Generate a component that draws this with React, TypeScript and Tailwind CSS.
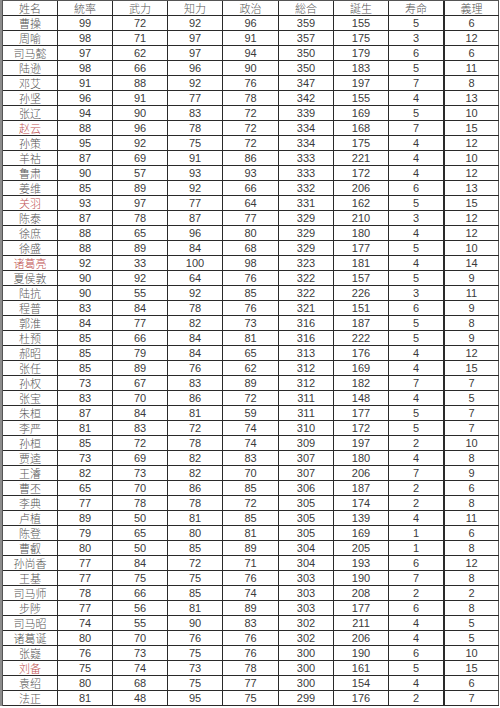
const cols = ["姓名", "統率", "武力", "知力", "政治", "総合", "誕生", "寿命", "義理"];

const rows: [string, ...number[]][] = [
  ["曹操", 99, 72, 92, 96, 359, 155, 5, 6],
  ["周喻", 98, 71, 97, 91, 357, 175, 3, 12],
  ["司马懿", 97, 62, 97, 94, 350, 179, 6, 6],
  ["陆逊", 98, 66, 96, 90, 350, 183, 5, 11],
  ["邓艾", 91, 88, 92, 76, 347, 197, 7, 8],
  ["孙坚", 96, 91, 77, 78, 342, 155, 4, 13],
  ["张辽", 94, 90, 83, 72, 339, 169, 5, 10],
  ["赵云", 88, 96, 78, 72, 334, 168, 7, 15],
  ["孙策", 95, 92, 75, 72, 334, 175, 4, 12],
  ["羊祜", 87, 69, 91, 86, 333, 221, 4, 10],
  ["鲁肃", 90, 57, 93, 93, 333, 172, 4, 12],
  ["姜维", 85, 89, 92, 66, 332, 206, 6, 13],
  ["关羽", 93, 97, 77, 64, 331, 162, 5, 15],
  ["陈泰", 87, 78, 87, 77, 329, 210, 3, 12],
  ["徐庶", 88, 65, 96, 80, 329, 180, 4, 12],
  ["徐盛", 88, 89, 84, 68, 329, 177, 5, 10],
  ["诸葛亮", 92, 33, 100, 98, 323, 181, 4, 14],
  ["夏侯敦", 90, 92, 64, 76, 322, 157, 5, 9],
  ["陆抗", 90, 55, 92, 85, 322, 226, 3, 11],
  ["程普", 83, 84, 78, 76, 321, 151, 6, 9],
  ["郭淮", 84, 77, 82, 73, 316, 187, 5, 8],
  ["杜预", 85, 66, 84, 81, 316, 222, 5, 9],
  ["郝昭", 85, 79, 84, 65, 313, 176, 4, 12],
  ["张任", 85, 89, 76, 62, 312, 169, 4, 15],
  ["孙权", 73, 67, 83, 89, 312, 182, 7, 7],
  ["张宝", 83, 70, 86, 72, 311, 148, 4, 5],
  ["朱桓", 87, 84, 81, 59, 311, 177, 5, 7],
  ["李严", 81, 83, 72, 74, 310, 172, 5, 7],
  ["孙桓", 85, 72, 78, 74, 309, 197, 2, 10],
  ["贾逵", 73, 69, 82, 83, 307, 180, 4, 8],
  ["王濬", 82, 73, 82, 70, 307, 206, 7, 9],
  ["曹丕", 65, 70, 86, 85, 306, 187, 2, 6],
  ["李典", 77, 78, 78, 72, 305, 174, 2, 8],
  ["卢植", 89, 50, 81, 85, 305, 139, 4, 11],
  ["陈登", 79, 65, 80, 81, 305, 169, 1, 6],
  ["曹叡", 80, 50, 85, 89, 304, 205, 1, 8],
  ["孙尚香", 77, 84, 72, 71, 304, 193, 6, 12],
  ["王基", 77, 75, 75, 76, 303, 190, 7, 8],
  ["司马师", 78, 66, 85, 74, 303, 208, 2, 2],
  ["步陟", 77, 56, 81, 89, 303, 177, 6, 8],
  ["司马昭", 74, 55, 90, 83, 302, 211, 4, 5],
  ["诸葛诞", 80, 70, 76, 76, 302, 206, 4, 5],
  ["张嶷", 76, 73, 75, 76, 300, 190, 6, 10],
  ["刘备", 75, 74, 73, 78, 300, 161, 5, 15],
  ["袁绍", 80, 68, 75, 77, 300, 154, 4, 6],
  ["法正", 81, 48, 95, 75, 299, 176, 2, 7],
];

const red = new Set(["赵云", "关羽", "诸葛亮", "刘备"]);

const grid =
  "grid grid-cols-[55px_55px_55px_55px_56px_55px_55px_56px_54px] h-[15px] border-b border-[#2a2a2a]";
const cell = "flex items-center justify-center border-r border-[#2a2a2a] leading-none";
const lastCell = "flex items-center justify-center border-r border-[#555] leading-none";
const cjk = "font-['Noto_Sans_CJK_SC',serif] font-light text-[11px]";
const num = "font-['Liberation_Sans',Arial,sans-serif] text-[11px] text-[#3a3a3a]";

export default function App() {
  return (
    <div className="w-[500px] h-[708px] bg-white">
      <div className="w-[499px] border-l-2 border-[#8c8c8c]">
        <div className="border-l border-t border-[#555] w-[497px]">
          <div className={grid}>
            {cols.map((c, i) => (
              <div
                key={c}
                className={`${i === 8 ? lastCell : cell} ${i === 7 ? "border-r-2" : ""} ${cjk} text-[#555]`}
              >
                {c}
              </div>
            ))}
          </div>
          {rows.map(([name, ...vals]) => (
            <div key={name} className={grid}>
              <div className={`${cell} ${cjk} ${red.has(name) ? "text-[#c05050]" : "text-[#555]"}`}>
                {name}
              </div>
              {vals.map((v, i) => (
                <div
                  key={i}
                  className={`${i === 7 ? lastCell : cell} ${i === 6 ? "border-r-2" : ""} ${num}`}
                >
                  {v}
                </div>
              ))}
            </div>
          ))}
        </div>
      </div>
    </div>
  );
}
